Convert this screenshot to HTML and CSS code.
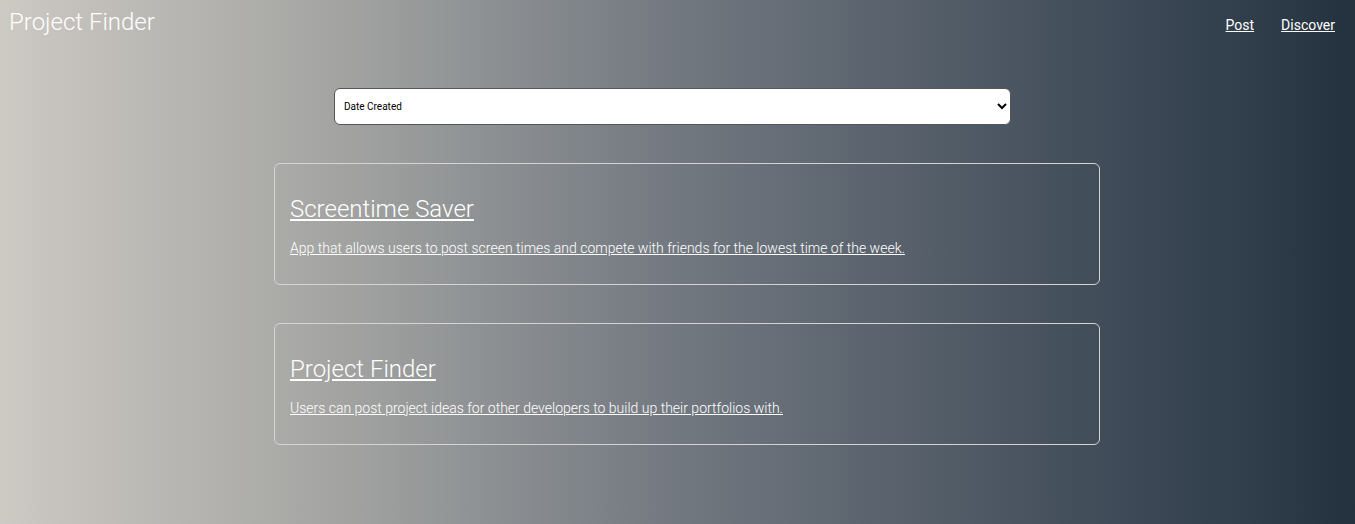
FILE: index.html
```html
<!DOCTYPE html>
<html>
<head>
<meta charset="utf-8">
<title>Project Finder</title>
<link rel="stylesheet" href="styles.css">
</head>
<body>
<header class="topbar">
  <div class="brand">Project Finder</div>
  <nav class="nav">
    <a href="#" class="nav-link">Post</a>
    <a href="#" class="nav-link">Discover</a>
  </nav>
</header>
<main class="content">
  <div class="sort-row">
    <select class="sort-select">
      <option>Date Created</option>
      <option>Title</option>
    </select>
  </div>
  <section class="cards">
    <a href="#" class="card">
      <h2 class="card-title">Screentime Saver</h2>
      <p class="card-desc">App that allows users to post screen times and compete with friends for the lowest time of the week.</p>
    </a>
    <a href="#" class="card">
      <h2 class="card-title">Project Finder</h2>
      <p class="card-desc">Users can post project ideas for other developers to build up their portfolios with.</p>
    </a>
  </section>
</main>
</body>
</html>
```

FILE: styles.css
```css
html, body {
  margin: 0;
  height: 100%;
}
body {
  font-family: Roboto, "Liberation Sans", sans-serif;
  font-weight: 300;
  color: #ffffff;
  background: linear-gradient(to right, #cdc9c3 0%, #a3a4a2 25%, #727880 50%, #4a5561 75%, #243240 100%);
  min-height: 524px;
}
.topbar {
  display: flex;
  justify-content: space-between;
  align-items: flex-start;
  padding: 7px 20px 0 9px;
}
.brand {
  font-size: 24px;
  line-height: 30px;
}
.nav {
  display: flex;
  gap: 27px;
  padding-top: 10px;
}
.nav-link {
  color: #ffffff;
  font-size: 14px;
  font-weight: 400;
  text-decoration: underline;
}
.content {
  display: flex;
  flex-direction: column;
  align-items: flex-start;
}
.sort-row {
  padding: 51px 0 0 334px;
}
.sort-select {
  width: 677px;
  height: 37px;
  border: 1px solid #555;
  border-radius: 6px;
  background: #ffffff;
  font-family: Roboto, "Liberation Sans", sans-serif;
  font-size: 10px;
  font-weight: 400;
  padding: 0 5px;
  color: #000;
}
.cards {
  display: flex;
  flex-direction: column;
  gap: 38px;
  margin: 38px 0 0 274px;
  width: 826px;
}
.card {
  display: block;
  color: #ffffff;
  border: 1px solid #d4d4d4;
  border-radius: 6px;
  padding: 30px 15px 26px;
  height: 122px;
  box-sizing: border-box;
}
.card-title {
  margin: 0 0 15px;
  font-size: 24px;
  font-weight: 300;
  line-height: 30px;
}
.card-desc {
  margin: 0;
  font-size: 14px;
  line-height: 18px;
}
```
